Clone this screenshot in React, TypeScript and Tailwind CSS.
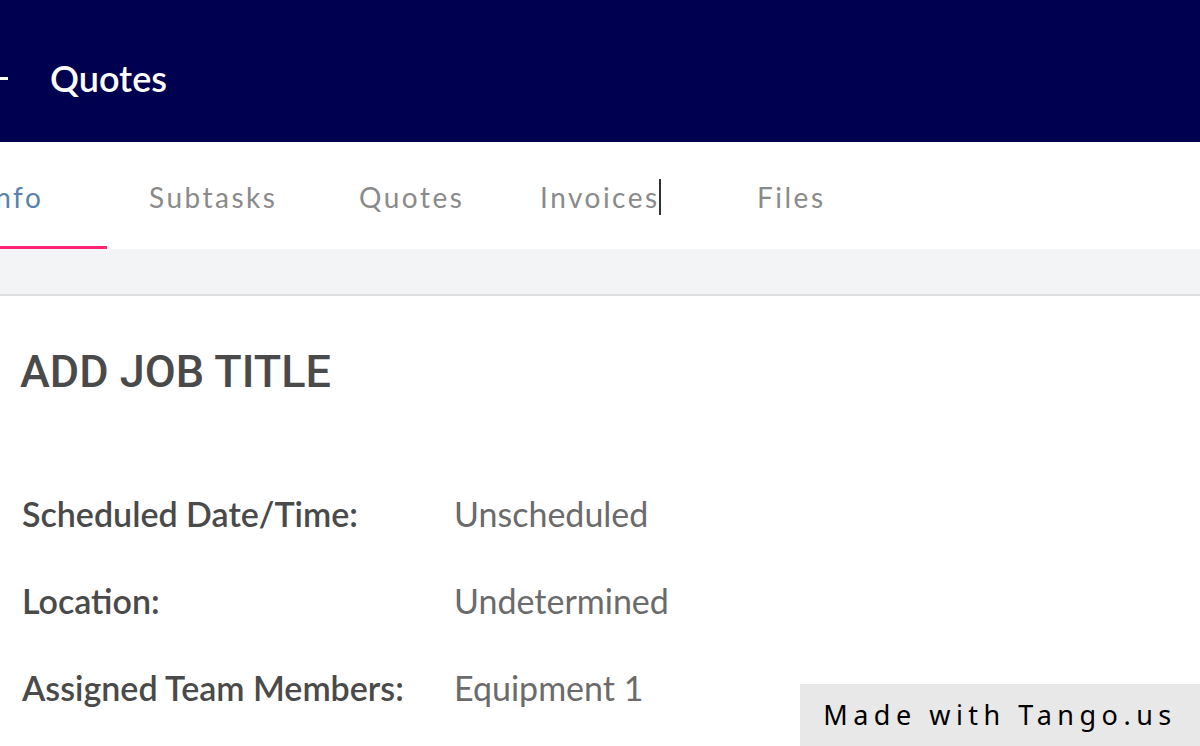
import { ReactNode } from "react";

const tabs = [
  { name: "Subtasks", w: "w-[210px]" },
  { name: "Quotes", w: "w-[181px]" },
  { name: "Invoices", w: "w-[217px]" },
  { name: "Files", w: "w-[120px]" },
];

const details = [
  { label: "Scheduled Date/Time:", value: "Unscheduled" },
  { label: "Location:", value: "Undetermined" },
  { label: "Assigned Team Members:", value: "Equipment 1" },
];

function Row({ label, children }: { label: string; children: ReactNode }) {
  return (
    <div className="flex h-[87px] items-center">
      <div className="w-[432px] shrink-0 text-[34px] font-semibold text-[#4a4a4a]">{label}</div>
      <div className="text-[34px] text-[#6b6b6b]">{children}</div>
    </div>
  );
}

export default function App() {
  return (
    <div className="relative h-[746px] w-[1200px] overflow-hidden bg-white font-['Lato',sans-serif]">
      <header className="flex h-[142px] items-center bg-[#000050] pt-[14px]">
        <div className="mr-[42px] h-[3px] w-[8px] bg-white" />
        <h1 className="text-[36px] font-semibold text-white">Quotes</h1>
      </header>

      <nav className="flex h-[107px] items-center bg-white pt-[3px]">
        <div className="relative flex h-full w-[107px] items-center">
          <span className="-ml-[15px] text-[28px] tracking-[2.5px] text-[#5a82ad]">Info</span>
          <div className="absolute bottom-0 left-0 h-[3px] w-[107px] bg-[#ff2372]" />
        </div>
        <div className="ml-[42px] flex h-full items-center">
          {tabs.map((tab) => (
            <div key={tab.name} className={`flex items-center text-[28px] tracking-[2.5px] text-[#8a8a8a] ${tab.w}`}>
              {tab.name}
              {tab.name === "Invoices" && <span className="-ml-[1px] h-[36px] w-[2px] bg-[#333]" />}
            </div>
          ))}
        </div>
      </nav>

      <div className="h-[47px] border-b-2 border-[#dedede] bg-[#f3f4f5]" />

      <main className="px-[20px]">
        <h2 className="mt-[42px] font-['Roboto',sans-serif] text-[45px] font-medium text-[#4a4a4a]">
          ADD JOB TITLE
        </h2>
        <div className="mt-[64px] pl-[2px]">
          {details.map((d) => (
            <Row key={d.label} label={d.label}>
              {d.value}
            </Row>
          ))}
        </div>
      </main>

      <div className="absolute bottom-0 right-0 flex h-[62px] w-[400px] items-center justify-center bg-[#e8e8e8] font-['Noto_Sans',sans-serif] text-[27px] tracking-[5.5px] text-black">
        Made with Tango.us
      </div>
    </div>
  );
}
